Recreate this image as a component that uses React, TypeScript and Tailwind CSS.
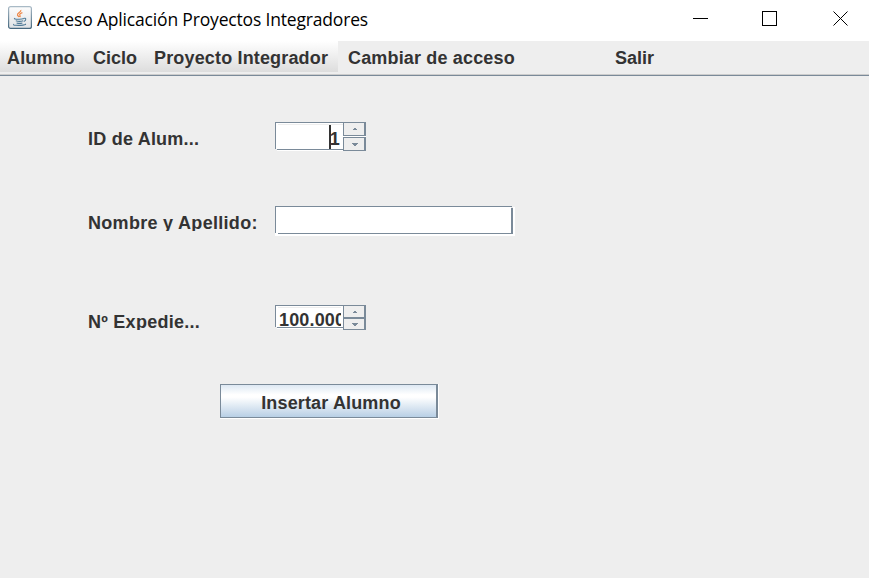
import React from "react";

const bold = "font-['Liberation_Sans',Arial,sans-serif] font-bold text-[18px] leading-[20px] text-[#333333] whitespace-nowrap";

function JavaIcon() {
  return (
    <svg width="24" height="24" viewBox="0 0 24 24" fill="none">
      <defs>
        <linearGradient id="tile" x1="0" y1="0" x2="0" y2="1">
          <stop offset="0" stopColor="#fdfdfd" />
          <stop offset="1" stopColor="#dfe2e5" />
        </linearGradient>
        <linearGradient id="edge" x1="0" y1="0" x2="0" y2="1">
          <stop offset="0" stopColor="#a9bac6" />
          <stop offset="1" stopColor="#46687f" />
        </linearGradient>
      </defs>
      <rect x="0.6" y="0.6" width="22.8" height="21.8" rx="2" fill="url(#tile)" stroke="url(#edge)" strokeWidth="1.2" />
      <path d="M12.8 4c1 2-3.8 3-3.3 5 .2.9 1.4 1.4 1.7 2.1M14.4 6.6c-2.2.8-3.2 1.6-2.5 2.7.5.8.6 1.2-.2 1.8" stroke="#ee8543" strokeWidth="1.2" />
      <path d="M7 12.2c-1.8.8.5 1.2 4.3 1.1 2 0 3.5-.3 4.7-.7M7.8 14.8c2.4.8 5.2.7 7.4 0M8.6 16.9c1.8.6 4 .6 5.8 0M15.6 12.4c2.6-1 3.1 1.9.2 3M6 18.2c-2.2 1.1 4.5 1.5 9 .9 2.4-.3 3.2-.7 2-1.1" stroke="#507b97" strokeWidth="1.1" />
    </svg>
  );
}

function Arrow({ down = false }: { down?: boolean }) {
  return (
    <svg width="6" height="3" viewBox="0 0 6 3" shapeRendering="crispEdges" fill="#7a8a99">
      {down ? <path d="M0 0h6v1H5v1H4v1H2V2H1V1H0z" /> : <path d="M2 0h2v1h1v1H1V1h1z" />}
    </svg>
  );
}

function Spinner({ value, caret = false }: { value: string; caret?: boolean }) {
  return (
    <div className={`flex w-[91px] shrink-0 ${caret ? "h-[29px]" : "h-[25px]"}`}>
      <div className={`flex w-[68px] flex-col ${caret ? "h-[29px]" : "h-[24px]"}`}>
        <div className="flex min-h-0 grow border-t border-l border-[#7a8a99] bg-white pt-px pl-[2px]">
          <div className={`flex min-w-0 grow border-t border-[#eeeeee] ${caret ? "justify-end pr-[3px]" : "mr-[2px] overflow-hidden pl-px"}`}>
            {caret && <span className="h-[24px] w-[2px] shrink-0 bg-[#333333]" />}
            <span className={`${bold} ${caret ? "-ml-px pt-[4px]" : "pt-[2px]"} tracking-[0.15px]`}>{value}</span>
          </div>
        </div>
        <div className="ml-[2px] h-px shrink-0 bg-[#7a8a99]" />
        <div className="ml-[2px] h-px shrink-0 bg-white" />
      </div>
      <div className={`flex w-[23px] flex-col bg-white ${caret ? "gap-px" : ""}`}>
        <div className={`flex items-center justify-center border border-r-2 border-[#7a8a99] bg-[#eeeeee] pt-px pl-[2px] ${caret ? "h-[14px]" : "h-[13px]"}`}>
          <Arrow />
        </div>
        <div className="flex grow items-center justify-center border border-r-2 border-[#7a8a99] bg-[#eeeeee] pl-[2px]">
          <Arrow down />
        </div>
      </div>
    </div>
  );
}

export default function App() {
  return (
    <div className="flex h-[578px] w-[869px] flex-col overflow-hidden bg-[#eeeeee]">
      <header className="flex h-[41px] shrink-0 bg-white pl-2">
        <div className="w-[29px] pt-[6px]"><JavaIcon /></div>
        <h1 className="grow whitespace-nowrap pt-[7px] font-['Open_Sans','Noto_Sans',sans-serif] text-[17.5px] leading-[24px] tracking-[-0.17px] text-black">Acceso Aplicación Proyectos Integradores</h1>
        <svg className="mt-[11px] mr-[20px]" width="156" height="16" viewBox="0 0 156 16" fill="none" stroke="#000" strokeWidth="1">
          <path d="M0 7.5h15" />
          <rect x="69.5" y="0.5" width="14" height="14" />
          <path d="M140.5 0.5l14 14M154.5 0.5l-14 14" />
        </svg>
      </header>

      <nav className={`flex h-[33px] shrink-0 tracking-[0.16px] ${bold}`}>
        <div className="flex h-[31px] w-[338px] bg-linear-to-b from-white to-[#dddddd] pt-[7px] pl-[7px]">
          <span className="w-[86px] shrink-0">Alumno</span>
          <span className="w-[61px] shrink-0 tracking-normal">Ciclo</span>
          <span>Proyecto Integrador</span>
        </div>
        <span className="w-[277px] pt-[7px] pl-[10px]">Cambiar de acceso</span>
        <span className="pt-[7px] tracking-normal">Salir</span>
      </nav>
      <div className="h-px shrink-0 bg-[#cccccc]" />
      <div className="h-px shrink-0 bg-[#7a8a99]" />

      <main className="flex flex-col pt-[46px] pl-[88px]">
        <div className="flex h-[84px]">
          <label className={`w-[187px] pt-[7px] tracking-[0.22px] ${bold}`}>ID de Alum...</label>
          <Spinner value="1" caret />
        </div>
        <div className="flex h-[99px]">
          <div className="w-[187px] pt-[7px]">
            <label className={`block h-[18px] overflow-hidden tracking-[0.3px] ${bold}`}>Nombre y Apellido:</label>
          </div>
          <div className="flex h-[30px] w-[240px] flex-col">
            <div className="mr-[3px] h-px bg-[#7a8a99]" />
            <div className="flex h-[26px]">
              <div className="w-px bg-[#7a8a99]" />
              <div className="grow bg-white" />
              <div className="mt-px w-[2px] bg-[#7a8a99]" />
              <div className="w-[2px] bg-white" />
            </div>
            <div className="flex h-px">
              <div className="w-[3px] bg-white" />
              <div className="grow bg-[#7a8a99]" />
              <div className="w-[2px] bg-white" />
            </div>
            <div className="h-[2px] bg-white" />
          </div>
        </div>
        <div className="flex h-[79px]">
          <div className="w-[187px] pt-[7px]">
            <label className={`block h-[18px] overflow-hidden tracking-[0.26px] ${bold}`}>Nº Expedie...</label>
          </div>
          <Spinner value="100.000" />
        </div>
        <div className="ml-[132px] h-[35px] w-[219px] border-r border-b border-white">
          <button className={`block h-[34px] w-[218px] border border-r-2 border-[#7a8a99] bg-[linear-gradient(to_bottom,#dde8f3_0%,#ffffff_30%,#ffffff_38%,#b8cfe5_100%)] pt-[4px] pl-[5px] tracking-[0.15px] ${bold}`}>Insertar Alumno</button>
        </div>
      </main>
    </div>
  );
}
